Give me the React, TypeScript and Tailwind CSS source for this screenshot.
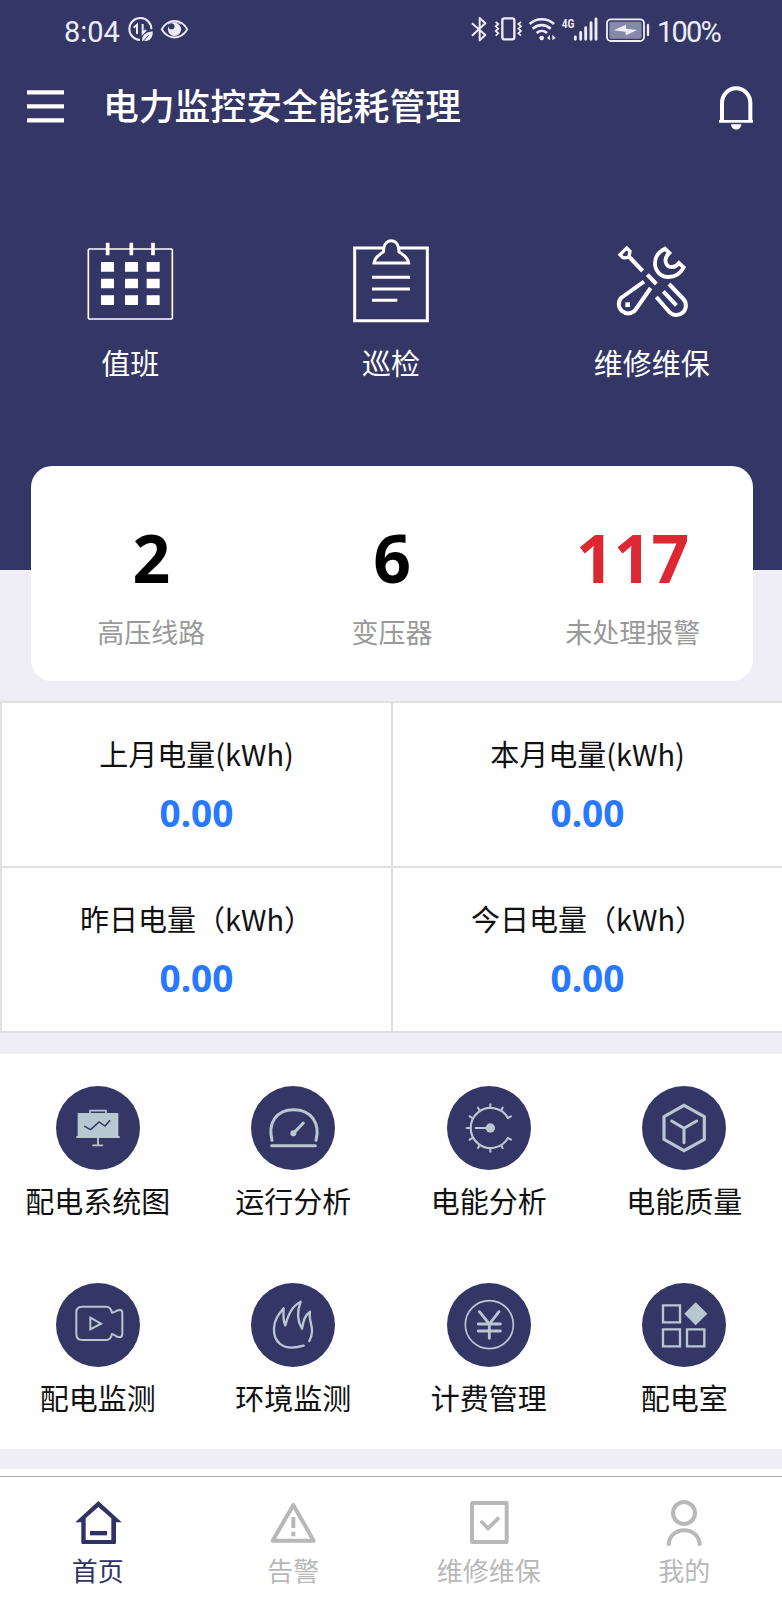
import type { ReactNode } from 'react';

const NAVY = '#343766';
const STEEL = '#b9c8d0';

/* ---------- status bar ---------- */

function StatusBar() {
  return (
    <div className="flex h-[60px] items-center pl-[64px] text-[#ecedf5]">
      <span className="mt-[3px] w-[63px] font-[Roboto] text-[29px] leading-[30px]">8:04</span>
      <svg className="h-[30px] w-[27px]" viewBox="381 45 81 90" fill="none" stroke="currentColor">
        <path d="M420 120A33 33 0 1 1 454 88" strokeWidth="6" />
        <path d="M401 83l10-9v28M428 72v28l10-10" strokeWidth="6" />
        <path d="M427 124c-3-18 10-28 31-30 2 18-9 31-25 29z" fill="currentColor" stroke="none" />
        <path d="M428 126l18-20" stroke={NAVY} strokeWidth="3" />
      </svg>
      <svg className="ml-[6px] h-[30px] w-[29px]" viewBox="480 45 88 90" fill="none" stroke="currentColor">
        <path d="M485 88c20-34 58-34 78 0-20 33-58 33-78 0z" strokeWidth="5.5" strokeLinejoin="round" />
        <circle cx="524" cy="88" r="20" fill="currentColor" stroke="none" />
        <circle cx="515" cy="79" r="9" fill={NAVY} stroke="none" />
        <path d="M504 72c12-7 28-7 40 0" strokeWidth="3" />
      </svg>

      <svg className="ml-[280px] h-[30px] w-[19px]" viewBox="234 45 57 90" fill="none" stroke="currentColor">
        <path d="M243 70l40 35-17 16V54l17 16-40 37" strokeWidth="6" strokeLinejoin="round" />
      </svg>
      <svg className="ml-[5px] h-[30px] w-[30px]" viewBox="306 45 90 90" fill="none" stroke="currentColor">
        <rect x="334" y="55" width="36" height="63" rx="6" strokeWidth="7" />
        <path d="M314 66l8 6-8 7 8 7-8 7 8 7-8 7M390 66l-8 6 8 7-8 7 8 7-8 7 8 7" strokeWidth="5" />
      </svg>
      <svg className="ml-[5px] h-[30px] w-[28px]" viewBox="411 45 84 90" fill="none" stroke="currentColor">
        <path d="M416 72c20-19 53-19 73 0M425 86c16-14 38-14 54 0M437 99c9-8 22-8 31 0" strokeWidth="8" />
        <circle cx="452" cy="114" r="7" fill="currentColor" stroke="none" />
        <path d="M477 104v17l-9-7zM484 104v17l10-7z" fill="currentColor" stroke="none" />
      </svg>
      <svg className="ml-[5px] h-[30px] w-[38px]" viewBox="510 45 114 90" fill="none" stroke="currentColor">
        <text x="512" y="83" fill="currentColor" stroke="none" fontFamily="Roboto" fontWeight="700" fontSize="38" textLength="38" lengthAdjust="spacingAndGlyphs">
          4G
        </text>
        <path d="M553 111v7M569 97v21M584 83v35M600 68v50M615 57v61" strokeWidth="8.5" strokeLinecap="round" />
      </svg>
      <svg className="ml-[6px] h-[30px] w-[46px]" viewBox="642 45 138 90" fill="none" stroke="currentColor">
        <rect x="648" y="58" width="111" height="65" rx="12" strokeWidth="5.5" />
        <rect x="655" y="65" width="97" height="51" rx="6" fill="#868aaa" stroke="none" />
        <path d="M668 91l37-17v12l33 4-33 16-2-11z" fill="currentColor" stroke="none" />
        <path d="M771 75v30" strokeWidth="7" strokeLinecap="round" />
      </svg>
      <span className="ml-[6px] mt-[3px] font-[Roboto] text-[29px] leading-[30px] tracking-[-1.8px]">100%</span>
    </div>
  );
}

function TitleBar() {
  return (
    <div className="flex h-[92px] items-start px-[27px] text-white">
      <svg className="mt-[29px] h-[36px] w-[37px]" viewBox="0 0 37 36" fill="currentColor">
        <path d="M0 1.3h37v4.2H0zM0 15.3h37v4.2H0zM0 29.3h37v4.2H0z" />
      </svg>
      <h1 className="ml-[39px] mt-[18px] text-[35.8px] font-medium leading-[52px]">电力监控安全能耗管理</h1>
      <svg className="ml-auto mr-[1px] mt-[25px] h-[46px] w-[36px]" viewBox="981 255 108 138" fill="none" stroke="currentColor">
        <path d="M993 360v-51a42.5 44 0 0 1 85 0v51" strokeWidth="12" />
        <path d="M984 364h102" strokeWidth="8" />
        <path d="M1020 373h31c-1 21-30 21-31 0z" fill="currentColor" stroke="none" />
      </svg>
    </div>
  );
}

/* ---------- quick actions ---------- */

function CalendarIcon() {
  return (
    <svg className="size-[90px]" viewBox="255 47 270 270" fill="none" stroke="white">
      <rect x="265" y="86" width="252" height="210" rx="3" strokeWidth="5" />
      <path d="M323 67v38M394 67v38M459 67v38" strokeWidth="11" />
      <path
        d="M303 125h39v29h-39zM375 125h39v29h-39zM440 125h39v29h-39zM303 175h39v29h-39zM375 175h39v29h-39zM440 175h39v29h-39zM303 225h39v29h-39zM375 225h39v29h-39zM440 225h39v29h-39z"
        fill="white"
        stroke="none"
      />
    </svg>
  );
}

function ClipboardIcon() {
  return (
    <svg className="size-[90px]" viewBox="1038 48 270 270" fill="none" stroke="white" strokeWidth="9">
      <path d="M1151 84h-87v218h218V84h-87" />
      <path d="M1122 129c2-14 12-24 28-33l1-11c5-30 40-30 45 0l1 11c16 9 27 19 29 33z" />
      <path d="M1116 172h114M1116 207h114M1116 241h76" />
    </svg>
  );
}

function ToolsIcon() {
  return (
    <svg className="size-[90px]" viewBox="647 48 270 270" fill="none" stroke="white" strokeWidth="12">
      <path d="M706 84l10 10-3 16q-9 6-19 2l-8-8z" strokeWidth="10" />
      <path d="M711 108l43 45M768 164l27 28" />
      <path d="M758 185l-68 48a28 28 0 1 0 42 37l46-66" />
      <path d="M702 247h14v14h-14z" fill="white" stroke="none" />
      <path
        d="M821 86l13 13c-19 16-13 43 9 42 9 0 14-4 20-12l14 13c-11 21-26 29-45 29-24 0-41-18-41-41 0-20 11-35 30-44z"
        strokeWidth="11.5"
      />
      <path d="M833 192l43 45a28 28 0 0 1-42 39l-39-45" />
      <path d="M816 214l39 42" />
    </svg>
  );
}

function QuickAction({ icon, label }: { icon: ReactNode; label: string }) {
  return (
    <div className="flex flex-1 flex-col items-center">
      {icon}
      <span className="mt-[14px] text-[29px] leading-[44px] text-white">{label}</span>
    </div>
  );
}

/* ---------- summary and energy ---------- */

function Stat({ value, label, valueClass }: { value: string; label: string; valueClass: string }) {
  return (
    <div className="flex flex-1 flex-col items-center">
      <span className={`font-['Noto_Sans',sans-serif] text-[66px] font-bold leading-[92px] ${valueClass}`}>{value}</span>
      <span className="mt-[9px] text-[27px] leading-[40px] text-[#999999]">{label}</span>
    </div>
  );
}

function EnergyCell({ label, value }: { label: string; value: string }) {
  return (
    <div className="flex h-[163px] flex-col items-center bg-[#fefefe]">
      <span className="mt-[28px] text-[29px] leading-[44px] text-[#111111]">{label}</span>
      <span className="mt-[12px] font-['Noto_Sans',sans-serif] text-[37px] font-bold leading-[52px] text-[#2879ff]">
        {value}
      </span>
    </div>
  );
}

/* ---------- feature icons ---------- */

function RoundIcon({ viewBox, children }: { viewBox: string; children: ReactNode }) {
  return (
    <div className="size-[84px] overflow-hidden rounded-full bg-[#343766]">
      <svg className="size-full" viewBox={viewBox} fill="none" stroke={STEEL} strokeLinecap="round">
        {children}
      </svg>
    </div>
  );
}

const features = [
  {
    label: '配电系统图',
    icon: (
      <RoundIcon viewBox="168 48 252 252">
        <path d="M270 129v-7h48v7" strokeWidth="5" />
        <path d="M233 129h122v70H233z" fill={STEEL} stroke="none" />
        <path d="M231 201h126M294 201v25M279 226h28" strokeWidth="5.5" />
        <path d="M254 169l18 10 25-23 18 12 14-16" stroke={NAVY} strokeWidth="4.5" />
      </RoundIcon>
    ),
  },
  {
    label: '运行分析',
    icon: (
      <RoundIcon viewBox="754 48 252 252">
        <path d="M817 211c-13-51 12-92 65-92s80 41 67 92" strokeWidth="9" />
        <path d="M816 227h131M881 190l30-31" strokeWidth="9" />
        <circle cx="881" cy="190" r="9" fill={STEEL} stroke="none" />
      </RoundIcon>
    ),
  },
  {
    label: '电能分析',
    icon: (
      <RoundIcon viewBox="168 48 252 252">
        <path d="M351 144a60 60 0 1 0 0 60" strokeWidth="6.5" />
        <path
          d="M298 112v-9M331 120l4-7M351 144l9-5M351 204l9 5M331 227l4 7M298 236v9M265 227l-4 7M243 205l-7 4M237 174h-10M243 143l-7-4M265 120l-4-7M254 174h44"
          strokeWidth="6"
        />
        <circle cx="298" cy="174" r="14" fill={STEEL} stroke="none" />
      </RoundIcon>
    ),
  },
  {
    label: '电能质量',
    icon: (
      <RoundIcon viewBox="754 48 252 252">
        <path d="M880 106l61 34v68l-61 34-60-34v-68z" strokeWidth="9.5" />
        <path d="M843 153l37 22 38-22M880 175v43" strokeWidth="9" />
      </RoundIcon>
    ),
  },
  {
    label: '配电监测',
    icon: (
      <RoundIcon viewBox="168 641 252 252">
        <path
          d="M246 712h73q13 0 17 18c8 1 9-8 24-8q7 0 7 9v62q0 9-7 11c-15 0-16-9-24-10q-4 18-17 18h-73q-17 0-17-17v-66q0-17 17-17z"
          strokeWidth="6"
        />
        <path d="M271 745l32 18-32 17z" strokeWidth="6" strokeLinecap="butt" />
      </RoundIcon>
    ),
  },
  {
    label: '环境监测',
    icon: (
      <RoundIcon viewBox="754 641 252 252">
        <path
          d="M912 829c-66 19-91-14-89-53 1-27 16-43 29-59-1 18-3 36 5 51 9-32 19-57 46-71-11 29-12 55 4 81 4-20 7-40 24-51-6 32 18 49-2 88"
          strokeWidth="7"
          strokeLinejoin="round"
        />
      </RoundIcon>
    ),
  },
  {
    label: '计费管理',
    icon: (
      <RoundIcon viewBox="168 641 252 252">
        <circle cx="295" cy="766" r="72" strokeWidth="5" />
        <path d="M265 727l30 37 29-37M295 764v43M262 764h66M262 785h66" strokeWidth="8.5" />
      </RoundIcon>
    ),
  },
  {
    label: '配电室',
    icon: (
      <RoundIcon viewBox="754 641 252 252">
        <path d="M817 708h51v51h-51zM817 780h51v51h-51zM889 780h52v51h-52z" strokeWidth="7" strokeLinecap="butt" />
        <path d="M915 699l35 34-35 35-34-35z" fill={STEEL} stroke="none" />
      </RoundIcon>
    ),
  },
];

/* ---------- bottom navigation ---------- */

const tabs = [
  {
    label: '首页',
    tone: 'text-[#2f3263]',
    icon: (
      <svg className="size-[50px]" viewBox="218 204 150 150" fill="currentColor">
        <path
          d="M294 213l70 64h-17v61q0 4-4 4h-96q-4 0-4-4v-61h-18zM294 231l-38 34v65h77v-65z"
          fillRule="evenodd"
        />
        <path d="M269 303h51v13h-51z" />
      </svg>
    ),
  },
  {
    label: '告警',
    tone: 'text-[#b8b8b8]',
    icon: (
      <svg className="size-[50px]" viewBox="805 204 150 150" fill="none" stroke="currentColor">
        <path d="M881 225l61 107H819z" strokeWidth="12" strokeLinejoin="round" />
        <path d="M881 261v33M881 305v14" strokeWidth="12" />
      </svg>
    ),
  },
  {
    label: '维修维保',
    tone: 'text-[#b8b8b8]',
    icon: (
      <svg className="size-[50px]" viewBox="218 204 150 150" fill="none" stroke="currentColor">
        <rect x="242" y="219" width="104" height="117" rx="1" strokeWidth="12" />
        <path d="M268 273l22 22 33-32" strokeWidth="11" />
      </svg>
    ),
  },
  {
    label: '我的',
    tone: 'text-[#b8b8b8]',
    icon: (
      <svg className="size-[50px]" viewBox="805 204 150 150" fill="none" stroke="currentColor" strokeWidth="12">
        <circle cx="880" cy="249" r="33" />
        <path d="M834 347c0-62 93-62 93 0" />
      </svg>
    ),
  },
];

export default function App() {
  return (
    <div className="flex h-[1624px] w-[782px] flex-col overflow-hidden bg-[#efeef4] font-['Noto_Sans_CJK_SC',sans-serif]">
      <header className="h-[570px] shrink-0 bg-[#343766]">
        <StatusBar />
        <TitleBar />
        <div className="flex pt-[84px]">
          <QuickAction icon={<CalendarIcon />} label="值班" />
          <QuickAction icon={<ClipboardIcon />} label="巡检" />
          <QuickAction icon={<ToolsIcon />} label="维修维保" />
        </div>
      </header>

      <section className="ml-[31px] mt-[-104px] flex h-[215px] w-[722px] shrink-0 rounded-[21px] bg-white pt-[45px]">
        <Stat value="2" label="高压线路" valueClass="text-black" />
        <Stat value="6" label="变压器" valueClass="text-black" />
        <Stat value="117" label="未处理报警" valueClass="text-[#db2833]" />
      </section>

      <section className="mt-[20px] grid shrink-0 grid-cols-[389px_389px] gap-[2px] bg-[#e0e0e0] py-[2px] pl-[2px]">
        <EnergyCell label="上月电量(kWh)" value="0.00" />
        <EnergyCell label="本月电量(kWh)" value="0.00" />
        <EnergyCell label="昨日电量（kWh）" value="0.00" />
        <EnergyCell label="今日电量（kWh）" value="0.00" />
      </section>

      <section className="mt-[21px] grid h-[395px] shrink-0 grid-cols-4 content-start gap-y-[59.5px] bg-[#fefefe] pt-[32px]">
        {features.map((f) => (
          <div key={f.label} className="flex h-[137.5px] flex-col items-center">
            {f.icon}
            <span className="mt-[8px] text-[29px] leading-[44px] text-[#111111]">{f.label}</span>
          </div>
        ))}
      </section>

      <nav className="mt-[20px] flex-1 bg-white pt-[7px]">
        <div className="grid grid-cols-4 border-t border-[#b0b0b0] pt-[21px]">
          {tabs.map((t) => (
            <div key={t.label} className={`flex flex-col items-center ${t.tone}`}>
              {t.icon}
              <span className="mt-px text-[26px] leading-[42px]">{t.label}</span>
            </div>
          ))}
        </div>
      </nav>
    </div>
  );
}
